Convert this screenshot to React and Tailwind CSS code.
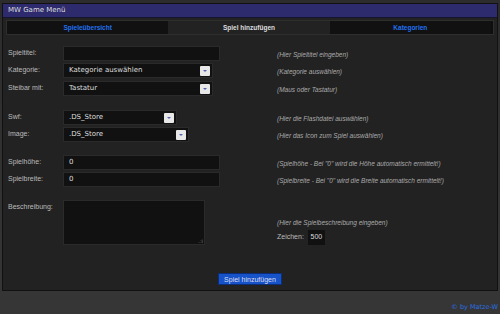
import React from 'react';

const lib = { fontFamily: '"Liberation Sans", Arial, sans-serif' };

const Select = ({ value, width }) => (
	<div
		className={`flex items-center justify-between h-[15px] bg-[#111] border border-[#2a2a2a] pl-[5px] pr-[2px] ${width}`}
	>
		<span className="text-[7px] text-[#ddd]">{value}</span>
		<span className="w-[10px] h-[10px] bg-[#e8e8e8] rounded-[1px] flex items-center justify-center">
			<span className="w-0 h-0 border-l-[2px] border-r-[2px] border-t-[2px] border-l-transparent border-r-transparent border-t-[#5566aa]" />
		</span>
	</div>
);

const Input = ({ value = '' }) => (
	<div className="h-[15px] w-[157px] bg-[#111] border border-[#2a2a2a] pl-[5px] flex items-center text-[7px] text-[#ddd]">
		{value}
	</div>
);

const Row = ({ label, field, hint, className = '' }) => (
	<div className={`flex items-start ${className}`}>
		<div className="w-[55px] text-[7px] text-[#bbb] pt-[2px]" style={lib}>
			{label}
		</div>
		<div className="w-[214px]">{field}</div>
		<div className="text-[6.5px] italic text-[#aaa] pt-[4px]" style={lib}>
			{hint}
		</div>
	</div>
);

const App = () => {
	return (
		<div
			className="w-[500px] h-[314px] bg-gradient-to-b from-[#2c2c2c] to-[#363636] relative pt-[3px] px-[2px]"
			style={{ fontFamily: '"DejaVu Sans", sans-serif' }}
		>
			{/* Window */}
			<div className="h-[288px] border border-[#111] bg-[#222] flex flex-col">
				{/* Title bar */}
				<div className="h-[14px] bg-[#2d2b6e] border-b border-[#151530] flex items-center pl-[5px] text-[7px] text-[#ddd]">
					MW Game Menü
				</div>

				{/* Tabs */}
				<div
					className="mx-[3px] mt-[2px] h-[15px] bg-[#0e0e0e] border border-[#2e2e2e] flex text-[6.5px] font-bold"
					style={lib}
				>
					<div className="flex-1 bg-[#111] flex items-center justify-center text-[#2070f0]">Spieleübersicht</div>
					<div className="flex-1 bg-[#222] flex items-center justify-center text-[#ddd]">Spiel hinzufügen</div>
					<div className="flex-1 bg-[#111] flex items-center justify-center text-[#2070f0] mr-[2px]">Kategorien</div>
				</div>

				{/* Form */}
				<div className="pl-[5px] pt-[11px] flex flex-col">
					<Row label="Spieltitel:" field={<Input />} hint="(Hier Spieltitel eingeben)" />
					<Row
						className="mt-[2px]"
						label="Kategorie:"
						field={<Select value="Kategorie auswählen" width="w-[150px]" />}
						hint="(Kategorie auswählen)"
					/>
					<Row
						className="mt-[3px]"
						label="Steibar mit:"
						field={<Select value="Tastatur" width="w-[150px]" />}
						hint="(Maus oder Tastatur)"
					/>
					<Row
						className="mt-[14px]"
						label="Swf:"
						field={<Select value=".DS_Store" width="w-[114px]" />}
						hint="(Hier die Flashdatei auswählen)"
					/>
					<Row
						className="mt-[2px]"
						label="Image:"
						field={<Select value=".DS_Store" width="w-[126px]" />}
						hint="(Hier das Icon zum Spiel auswählen)"
					/>
					<Row
						className="mt-[13px]"
						label="Spielhöhe:"
						field={<Input value="0" />}
						hint={'(Spielhöhe - Bei "0" wird die Höhe automatisch ermittelt!)'}
					/>
					<Row
						className="mt-[2px]"
						label="Spielbreite:"
						field={<Input value="0" />}
						hint={'(Spielbreite - Bei "0" wird die Breite automatisch ermittelt!)'}
					/>
					<div className="flex items-start mt-[13px]">
						<div className="w-[55px] text-[7px] text-[#bbb] pt-[2px]" style={lib}>
							Beschreibung:
						</div>
						<div className="w-[214px]">
							<div className="w-[142px] h-[45px] bg-[#111] border border-[#2a2a2a] relative">
								<span className="absolute right-[1px] bottom-[0px] text-[5px] text-[#888] leading-none">.:i</span>
							</div>
						</div>
						<div className="pt-[18px] flex flex-col" style={lib}>
							<div className="text-[6.5px] italic text-[#aaa]">(Hier die Spielbeschreibung eingeben)</div>
							<div className="flex items-center mt-[2px] text-[7px] text-[#bbb]">
								<span>Zeichen:</span>
								<span className="ml-[4px] w-[17px] h-[15px] bg-[#111] flex items-center justify-center text-[#ddd]">500</span>
							</div>
						</div>
					</div>

					{/* Submit */}
					<div className="flex justify-center mt-[28px] pr-[5px]">
						<button
							className="h-[12px] px-[5px] bg-[#1652c8] border border-[#0b2d7a] text-[7px] text-[#dde] leading-none"
							style={lib}
						>
							Spiel hinzufügen
						</button>
					</div>
				</div>
			</div>

			{/* Footer */}
			<div className="absolute right-[2px] bottom-[1px] text-[6.5px] text-[#2a6ee0]">© by Matze-W</div>
		</div>
	);
};

export default App;
